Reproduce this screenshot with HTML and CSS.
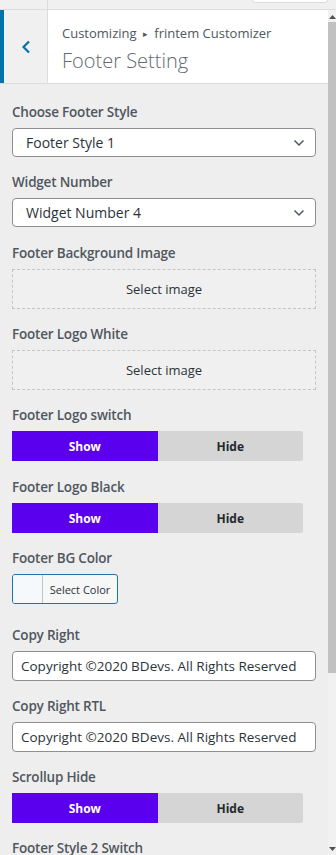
FILE: index.html
```html
<!DOCTYPE html>
<html>
<head>
<meta charset="utf-8">
<link rel="stylesheet" href="styles.css">
</head>
<body>
<div class="app">
  <div class="topbar">
    <div class="tb-left"></div>
    <div class="tb-right"><span class="tb-btn"></span></div>
  </div>
  <div class="main">
    <div class="panel">
      <header class="head">
        <div class="accent"></div>
        <div class="back">
          <svg width="10" height="14" viewBox="0 0 10 14"><path d="M8 1.5 L2.5 7 L8 12.5" fill="none" stroke="#0073aa" stroke-width="2.2"/></svg>
        </div>
        <div class="titles">
          <div class="crumb">Customizing <span class="sep">▸</span> frintem Customizer</div>
          <h1 class="title">Footer Setting</h1>
        </div>
      </header>
      <div class="controls">
        <div class="ctl">
          <div class="label">Choose Footer Style</div>
          <div class="select"><span>Footer Style 1</span><svg width="12" height="8" viewBox="0 0 12 8"><path d="M1.5 1.5 L6 6 L10.5 1.5" fill="none" stroke="#50575e" stroke-width="1.5"/></svg></div>
        </div>
        <div class="ctl ctl-wide">
          <div class="label">Widget Number</div>
          <div class="select"><span>Widget Number 4</span><svg width="12" height="8" viewBox="0 0 12 8"><path d="M1.5 1.5 L6 6 L10.5 1.5" fill="none" stroke="#50575e" stroke-width="1.5"/></svg></div>
        </div>
        <div class="ctl">
          <div class="label">Footer Background Image</div>
          <div class="imgbox">Select image</div>
        </div>
        <div class="ctl">
          <div class="label">Footer Logo White</div>
          <div class="imgbox">Select image</div>
        </div>
        <div class="ctl ctl-wide">
          <div class="label">Footer Logo switch</div>
          <div class="switch"><span class="on">Show</span><span class="off">Hide</span></div>
        </div>
        <div class="ctl">
          <div class="label">Footer Logo Black</div>
          <div class="switch"><span class="on">Show</span><span class="off">Hide</span></div>
        </div>
        <div class="ctl ctl-color">
          <div class="label">Footer BG Color</div>
          <div class="colorbtn"><span class="swatch"></span><span class="ctext">Select Color</span></div>
        </div>
        <div class="ctl">
          <div class="label">Copy Right</div>
          <div class="input">Copyright ©2020 BDevs. All Rights Reserved</div>
        </div>
        <div class="ctl">
          <div class="label">Copy Right RTL</div>
          <div class="input">Copyright ©2020 BDevs. All Rights Reserved</div>
        </div>
        <div class="ctl">
          <div class="label">Scrollup Hide</div>
          <div class="switch"><span class="on">Show</span><span class="off">Hide</span></div>
        </div>
        <div class="ctl">
          <div class="label">Footer Style 2 Switch</div>
        </div>
      </div>
    </div>
    <div class="scrollbar">
      <div class="sb-up"><svg width="7" height="5" viewBox="0 0 7 5"><path d="M0 5 L3.5 1 L7 5 Z" fill="#505050"/></svg></div>
      <div class="sb-thumb"></div>
      <div class="sb-track"></div>
      <div class="sb-down"><svg width="7" height="5" viewBox="0 0 7 5"><path d="M0 0 L3.5 4 L7 0 Z" fill="#505050"/></svg></div>
    </div>
  </div>
</div>
</body>
</html>
```
FILE: styles.css
```css
* { box-sizing: border-box; }
html, body { margin: 0; padding: 0; }
body {
  width: 336px;
  height: 855px;
  overflow: hidden;
  background: #eeeeee;
  font-family: "Open Sans", "Noto Sans", sans-serif;
  color: #50575e;
}
.app { display: flex; flex-direction: column; height: 855px; }
.topbar {
  height: 10px;
  flex-shrink: 0;
  display: flex;
  background: #f0f0f1;
  border-bottom: 1px solid #dcdcde;
}
.tb-left { width: 48px; border-right: 1px solid #dcdcde; }
.tb-right { flex: 1; display: flex; justify-content: flex-end; padding-right: 8px; }
.tb-btn {
  width: 76px;
  height: 3px;
  background: #fff;
  border: 1px solid #dcdcde;
  border-top: none;
  border-radius: 0 0 4px 4px;
}
.main { flex: 1; display: flex; min-height: 0; overflow: hidden; }
.panel { width: 328px; display: flex; flex-direction: column; }
.head {
  height: 74px;
  flex-shrink: 0;
  display: flex;
  background: #fff;
  border-bottom: 1px solid #dcdcde;
}
.accent { width: 4px; background: #0073aa; }
.back {
  width: 44px;
  background: #f0f0f1;
  border-right: 1px solid #dcdcde;
  display: flex;
  align-items: center;
  justify-content: center;
  padding-top: 1px;
}
.titles { padding: 14px 0 0 14px; }
.crumb { font-size: 13px; line-height: 18px; color: #50575e; }
.sep { font-size: 9px; vertical-align: 1px; margin: 0 3px; }
.title {
  margin: 4px 0 0;
  font-size: 20px;
  font-weight: 300;
  line-height: 28px;
  color: #646970;
}
.controls { padding: 18px 12px 0 12px; flex-shrink: 0; }
.ctl { margin-bottom: 15px; }
.ctl-wide { margin-bottom: 16px; }
.label {
  font-size: 13.5px;
  font-weight: 600;
  line-height: 20px;
  margin-bottom: 6px;
  color: #50575e;
  letter-spacing: -0.2px;
}
.select {
  height: 29px;
  background: #fff;
  border: 1px solid #8c8f94;
  border-radius: 4px;
  display: flex;
  align-items: center;
  justify-content: space-between;
  padding: 0 10px 0 13px;
  font-size: 14px;
  color: #2c3338;
}
.imgbox {
  height: 40px;
  background: #f0f0f1;
  border: 1px dashed #c3c4c7;
  display: flex;
  align-items: center;
  justify-content: center;
  font-size: 13px;
  color: #2c3338;
}
.switch {
  margin-top: 1px;
  width: 291px;
  height: 30px;
  display: flex;
  font-size: 12px;
  font-weight: 700;
}
.switch span { flex: 1; display: flex; align-items: center; justify-content: center; }
.on { background: #5b00ef; color: #fff; }
.off { background: #d5d5d5; color: #23282d; border-radius: 0 2px 2px 0; }
.ctl-color { margin-bottom: 21px; }
.colorbtn {
  width: 106px;
  height: 30px;
  border: 1px solid #2271b1;
  border-radius: 3px;
  display: flex;
  overflow: hidden;
  background: #f6f7f7;
}
.swatch { width: 30px; background: #f5f9fb; border-right: 1px solid #c3c4c7; }
.ctext { flex: 1; display: flex; align-items: center; justify-content: center; font-size: 11px; color: #2c3338; }
.input {
  height: 30px;
  background: #fff;
  border: 1px solid #8c8f94;
  border-radius: 4px;
  display: flex;
  align-items: center;
  padding-left: 8px;
  font-size: 13.5px;
  color: #2c3338;
  white-space: nowrap;
  overflow: hidden;
}
.scrollbar { width: 8px; display: flex; flex-direction: column; background: #f1f1f1; }
.sb-up { height: 12px; display: flex; align-items: center; justify-content: center; }
.sb-thumb { height: 651px; background: #c1c1c1; }
.sb-track { flex: 1; }
.sb-down { height: 12px; display: flex; align-items: flex-start; justify-content: center; padding-top: 4px; }
```
